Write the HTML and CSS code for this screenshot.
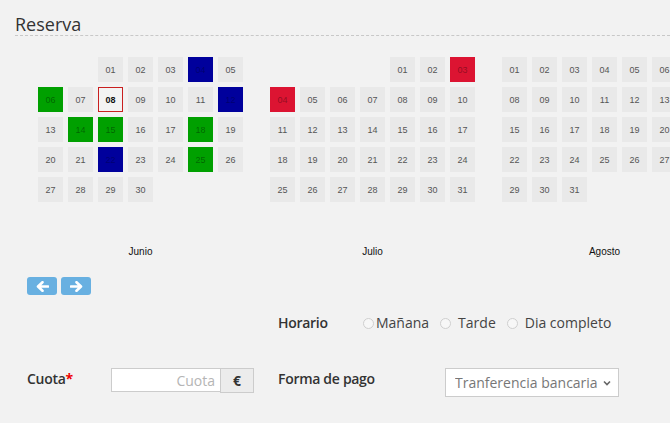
FILE: index.html
```html
<!DOCTYPE html>
<html lang="es">
<head>
<meta charset="utf-8">
<title>Reserva</title>
<link rel="stylesheet" href="styles.css">
</head>
<body>
<div class="page">
  <h2 class="title">Reserva</h2>

  <div class="calendar">
    <div class="month">
      <div class="days">
        <span class="blank"></span><span class="blank"></span><span class="day">01</span><span class="day">02</span><span class="day">03</span><span class="day blue">04</span><span class="day">05</span>
        <span class="day green">06</span><span class="day">07</span><span class="day selected">08</span><span class="day">09</span><span class="day">10</span><span class="day">11</span><span class="day blue">12</span>
        <span class="day">13</span><span class="day green">14</span><span class="day green">15</span><span class="day">16</span><span class="day">17</span><span class="day green">18</span><span class="day">19</span>
        <span class="day">20</span><span class="day">21</span><span class="day blue">22</span><span class="day">23</span><span class="day">24</span><span class="day green">25</span><span class="day">26</span>
        <span class="day">27</span><span class="day">28</span><span class="day">29</span><span class="day">30</span>
      </div>
      <div class="month-name">Junio</div>
    </div>
    <div class="month">
      <div class="days">
        <span class="blank"></span><span class="blank"></span><span class="blank"></span><span class="blank"></span><span class="day">01</span><span class="day">02</span><span class="day red">03</span>
        <span class="day red">04</span><span class="day">05</span><span class="day">06</span><span class="day">07</span><span class="day">08</span><span class="day">09</span><span class="day">10</span>
        <span class="day">11</span><span class="day">12</span><span class="day">13</span><span class="day">14</span><span class="day">15</span><span class="day">16</span><span class="day">17</span>
        <span class="day">18</span><span class="day">19</span><span class="day">20</span><span class="day">21</span><span class="day">22</span><span class="day">23</span><span class="day">24</span>
        <span class="day">25</span><span class="day">26</span><span class="day">27</span><span class="day">28</span><span class="day">29</span><span class="day">30</span><span class="day">31</span>
      </div>
      <div class="month-name">Julio</div>
    </div>
    <div class="month">
      <div class="days">
        <span class="day">01</span><span class="day">02</span><span class="day">03</span><span class="day">04</span><span class="day">05</span><span class="day">06</span><span class="day">07</span>
        <span class="day">08</span><span class="day">09</span><span class="day">10</span><span class="day">11</span><span class="day">12</span><span class="day">13</span><span class="day">14</span>
        <span class="day">15</span><span class="day">16</span><span class="day">17</span><span class="day">18</span><span class="day">19</span><span class="day">20</span><span class="day">21</span>
        <span class="day">22</span><span class="day">23</span><span class="day">24</span><span class="day">25</span><span class="day">26</span><span class="day">27</span><span class="day">28</span>
        <span class="day">29</span><span class="day">30</span><span class="day">31</span>
      </div>
      <div class="month-name">Agosto</div>
    </div>
  </div>

  <div class="nav">
    <button class="nav-btn" type="button" aria-label="Anterior">
      <svg width="13" height="11" viewBox="0 0 13 11"><path d="M12 5.5H2.5M6.5 1.2L2 5.5l4.5 4.3" fill="none" stroke="#fff" stroke-width="2.6" stroke-linecap="round" stroke-linejoin="round"/></svg>
    </button>
    <button class="nav-btn" type="button" aria-label="Siguiente">
      <svg width="13" height="11" viewBox="0 0 13 11"><path d="M1 5.5h9.5M6.5 1.2L11 5.5l-4.5 4.3" fill="none" stroke="#fff" stroke-width="2.6" stroke-linecap="round" stroke-linejoin="round"/></svg>
    </button>
  </div>

  <div class="form">
    <div class="row row-horario">
      <div class="col-left"></div>
      <div class="col-right">
        <span class="label label-horario">Horario</span>
        <label class="radio radio-first"><input type="radio" name="horario"><span>Mañana</span></label>
        <label class="radio"><input type="radio" name="horario"><span>Tarde</span></label>
        <label class="radio"><input type="radio" name="horario"><span>Dia completo</span></label>
      </div>
    </div>
    <div class="row row-pago">
      <div class="col-left">
        <span class="label label-cuota">Cuota<span class="req">*</span></span>
        <div class="input-group">
          <input class="text-input" type="text" placeholder="Cuota">
          <span class="addon">€</span>
        </div>
      </div>
      <div class="col-right col-top">
        <span class="label label-pago">Forma de pago</span>
        <div class="select-wrap">
          <select class="select">
            <option>Tranferencia bancaria</option>
          </select>
          <svg class="chevron" width="8" height="6" viewBox="0 0 8 6"><path d="M1 1.5l3 3 3-3" fill="none" stroke="#666" stroke-width="1.6"/></svg>
        </div>
      </div>
    </div>
  </div>
</div>
</body>
</html>
```

FILE: styles.css
```css
html, body {
  margin: 0;
  padding: 0;
  background: #f2f2f2;
  overflow: hidden;
}

.page {
  width: 670px;
  height: 423px;
  overflow: hidden;
  font-family: "Open Sans", "Liberation Sans", sans-serif;
  color: #333;
}

.title {
  margin: 13px 0 0 15px;
  padding: 0;
  font-size: 18px;
  font-weight: 400;
  line-height: 22px;
  color: #333;
  border-bottom: 1px dashed #c8c8c8;
}

.calendar {
  display: flex;
  gap: 27px;
  padding-left: 38px;
  margin-top: 21px;
  overflow: hidden;
}

.month {
  flex: 0 0 205px;
  width: 205px;
}

.days {
  display: grid;
  grid-template-columns: repeat(7, 25px);
  grid-template-rows: repeat(6, 25px);
  gap: 5px;
}

.day {
  display: flex;
  align-items: center;
  justify-content: center;
  background: #e9e9e9;
  font-family: "Liberation Sans", Arial, sans-serif;
  font-size: 9px;
  color: #555;
  box-sizing: border-box;
}

.day.green { background: #00a000; color: rgba(0, 0, 0, 0.38); }
.day.blue { background: #00009c; color: rgba(0, 0, 0, 0.3); }
.day.red { background: #dc1432; color: rgba(0, 0, 0, 0.35); }

.day.selected {
  background: #f3f3f3;
  border: 1px solid #c92020;
  color: #111;
  font-weight: 700;
  padding-top: 1px;
}

.month-name {
  margin-top: 14px;
  text-align: center;
  font-family: "Liberation Sans", Arial, sans-serif;
  font-size: 10px;
  line-height: 12px;
  color: #111;
}

.nav {
  display: flex;
  gap: 4px;
  margin: 19px 0 0 27px;
}

.nav-btn {
  width: 30px;
  height: 18px;
  padding: 0;
  border: 0;
  border-radius: 3px;
  background: #68b0e1;
  display: flex;
  align-items: center;
  justify-content: center;
}

.form {
  padding-left: 27px;
}

.row {
  display: flex;
  align-items: flex-start;
}

.row-horario {
  margin-top: 18px;
}

.row-pago {
  margin-top: 35px;
}

.col-left {
  width: 251px;
  display: flex;
  align-items: flex-start;
}

.col-right {
  display: flex;
  align-items: center;
}

.col-right.col-top {
  align-items: flex-start;
}

.label {
  font-size: 14px;
  line-height: 20px;
  font-weight: 600;
  letter-spacing: -0.3px;
  color: #333;
}

.label-cuota { padding-top: 1px; }
.label-horario { width: 85px; }
.label-cuota { width: 84px; }
.label-pago { width: 167px; padding-top: 1px; }

.req { color: #e00; font-weight: 700; }

.radio {
  display: flex;
  align-items: center;
  font-size: 14px;
  line-height: 20px;
  color: #444;
  margin-right: 11px;
}

.radio input {
  appearance: none;
  -webkit-appearance: none;
  width: 11px;
  height: 11px;
  margin: 1px 7px 0 0;
  border: 1px solid #cfcfcf;
  border-radius: 50%;
  background: #f7f7f7;
  box-sizing: border-box;
}

.radio-first input {
  margin-right: 2px;
}

.input-group {
  display: flex;
}

.text-input {
  width: 109px;
  height: 24px;
  box-sizing: border-box;
  border: 1px solid #ccc;
  border-right: 0;
  background: #fff;
  padding: 0 5px;
  margin: 0;
  text-align: right;
  font-family: "Open Sans", "Liberation Sans", sans-serif;
  font-size: 14px;
  color: #555;
}

.text-input::placeholder { color: #b5b5b5; }

.addon {
  width: 34px;
  height: 25px;
  box-sizing: border-box;
  border: 1px solid #ccc;
  background: #ececec;
  display: flex;
  align-items: center;
  justify-content: center;
  font-size: 14px;
  font-weight: 700;
  color: #333;
}

.select-wrap {
  position: relative;
  width: 174px;
  height: 29px;
}

.select {
  appearance: none;
  -webkit-appearance: none;
  width: 174px;
  height: 29px;
  box-sizing: border-box;
  border: 1px solid #ccc;
  border-radius: 0;
  background: #fff;
  padding: 0 0 0 9px;
  margin: 0;
  font-family: "Open Sans", "Liberation Sans", sans-serif;
  font-size: 14px;
  color: #777;
}

.chevron {
  position: absolute;
  right: 8px;
  top: 12px;
}
```
